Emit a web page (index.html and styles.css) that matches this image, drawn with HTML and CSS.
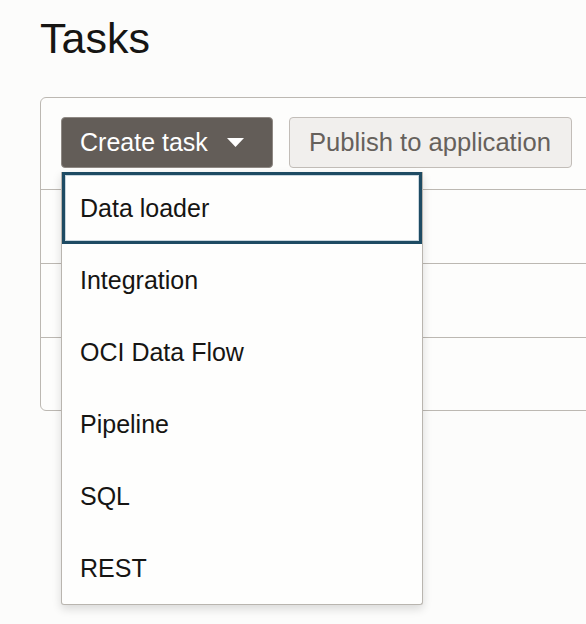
FILE: index.html
```html
<!DOCTYPE html>
<html lang="en">
<head>
<meta charset="utf-8">
<title>Tasks</title>
<link rel="stylesheet" href="styles.css">
</head>
<body>
<main class="page">
  <h1 class="title">Tasks</h1>
  <section class="panel">
    <div class="toolbar">
      <div class="menu-anchor">
        <button class="btn btn-primary" type="button">
          <span>Create task</span>
          <svg class="caret" width="17" height="9" viewBox="0 0 17 9" aria-hidden="true"><path d="M0 0 H17 L8.5 9 Z" fill="#ffffff"/></svg>
        </button>
        <ul class="menu" role="menu">
          <li class="menu-item is-focused" role="menuitem">Data loader</li>
          <li class="menu-item" role="menuitem">Integration</li>
          <li class="menu-item" role="menuitem">OCI Data Flow</li>
          <li class="menu-item" role="menuitem">Pipeline</li>
          <li class="menu-item" role="menuitem">SQL</li>
          <li class="menu-item" role="menuitem">REST</li>
        </ul>
      </div>
      <button class="btn btn-secondary" type="button">Publish to application</button>
    </div>
    <div class="row"></div>
    <div class="row"></div>
    <div class="row row-last"></div>
  </section>
</main>
</body>
</html>
```

FILE: styles.css
```css
html {
  overflow: hidden;
  background: #fcfcfb;
}

body {
  margin: 0;
  padding: 0;
  min-height: 624px;
  background: #fcfcfb;
  font-family: "Liberation Sans", Arial, sans-serif;
  color: #161513;
}

.page {
  padding-left: 40px;
}

.title {
  margin: 14px 0 35px;
  font-size: 43px;
  line-height: 48px;
  font-weight: 400;
  color: #161513;
}

.panel {
  width: 600px;
  border: 1px solid #bcb8b2;
  border-radius: 6px;
  background: #fdfdfc;
}

.toolbar {
  display: flex;
  align-items: center;
  gap: 16px;
  padding: 19px 20px 21px 20px;
  border-bottom: 1px solid #bcb8b2;
}

.menu-anchor {
  position: relative;
}

.btn {
  box-sizing: border-box;
  height: 51px;
  display: inline-flex;
  align-items: center;
  font-family: "Liberation Sans", Arial, sans-serif;
  font-size: 25.6px;
  border-radius: 4px;
  margin: 0;
}

.btn-primary {
  width: 212px;
  padding: 0 0 0 18px;
  font-size: 25px;
  background: #635d58;
  border: 1px solid #8f8984;
  color: #ffffff;
}

.caret {
  margin-left: 19px;
}

.btn-secondary {
  width: 283px;
  padding: 0 19px;
  background: #f1efed;
  border: 1px solid #c2bdb8;
  color: #66615c;
}

.row {
  height: 73px;
  border-bottom: 1px solid #bcb8b2;
}

.row-last {
  height: 72px;
  border-bottom: none;
}

.menu {
  position: absolute;
  left: 0;
  top: calc(100% + 4px);
  box-sizing: border-box;
  width: 362px;
  margin: 0;
  padding: 0;
  list-style: none;
  background: #fefefd;
  border: 1px solid #b9b5af;
  border-top: none;
  border-radius: 0 0 3px 3px;
  box-shadow: 0 4px 10px rgba(0, 0, 0, 0.14);
  z-index: 2;
}

.menu-item {
  box-sizing: border-box;
  height: 72px;
  display: flex;
  align-items: center;
  padding-left: 18px;
  font-size: 25px;
  color: #161513;
}

.menu-item.is-focused {
  box-shadow: inset 0 0 0 3px #1e4b63, inset 0 0 0 4px #c9d6de;
}
```
